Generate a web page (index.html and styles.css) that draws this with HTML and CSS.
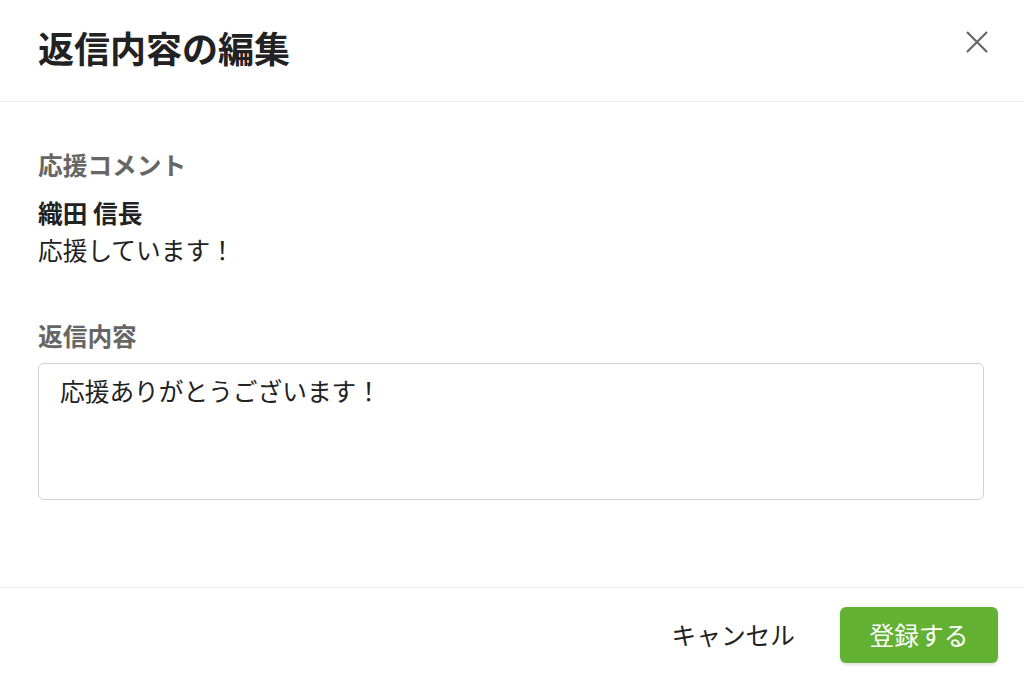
FILE: index.html
```html
<!DOCTYPE html>
<html lang="ja">
<head>
<meta charset="utf-8">
<title>返信内容の編集</title>
<link rel="stylesheet" href="styles.css">
</head>
<body>
<div class="modal">
  <header class="modal-header">
    <h1 class="modal-title">返信内容の編集</h1>
    <button class="close-btn" aria-label="閉じる">
      <svg width="24" height="24" viewBox="0 0 24 24"><path d="M2 2 L22 22 M22 2 L2 22" stroke="#666" stroke-width="2.2" fill="none"/></svg>
    </button>
  </header>
  <main class="modal-body">
    <div class="field-label">応援コメント</div>
    <div class="comment-author">織田 信長</div>
    <div class="comment-text">応援しています！</div>
    <label class="field-label reply-label" for="reply">返信内容</label>
    <textarea id="reply" class="reply-input">応援ありがとうございます！</textarea>
  </main>
  <footer class="modal-footer">
    <button class="btn-cancel">キャンセル</button>
    <button class="btn-submit">登録する</button>
  </footer>
</div>
</body>
</html>
```
FILE: styles.css
```css
* { box-sizing: border-box; }
html, body {
  margin: 0;
  padding: 0;
  background: #fff;
}
body {
  font-family: "Noto Sans CJK JP", "Noto Sans", sans-serif;
  font-size: 24.7px;
  line-height: 1.5;
  color: #222;
}
.modal {
  display: flex;
  flex-direction: column;
  height: 677px;
}
.modal-header {
  height: 102px;
  display: flex;
  align-items: center;
  justify-content: space-between;
  padding: 0 35px 6px 38px;
  border-bottom: 1px solid #ebebeb;
}
.modal-title {
  margin: 0;
  font-size: 36px;
  font-weight: 700;
  line-height: 1.2;
  color: #222;
}
.close-btn {
  background: none;
  border: 0;
  padding: 0;
  width: 24px;
  height: 24px;
  display: flex;
  cursor: pointer;
  margin-top: -11px;
}
.modal-body {
  padding: 44px 40px 0 38px;
  display: flex;
  flex-direction: column;
  flex: 1;
  border-bottom: 1px solid #ebebeb;
}
.field-label {
  font-weight: 700;
  color: #666;
}
.comment-author {
  font-weight: 700;
  margin-top: 11px;
}
.reply-label {
  margin-top: 49px;
}
.reply-input {
  margin-top: 9px;
  height: 137px;
  width: 100%;
  resize: none;
  border: 1px solid #d2d2d2;
  border-radius: 6px;
  padding: 8px 21px;
  font: inherit;
  color: #222;
  outline: none;
}
.modal-footer {
  height: 89px;
  display: flex;
  justify-content: flex-end;
  align-items: flex-start;
  gap: 45px;
  padding: 19px 26px 0 0;
}
.btn-cancel {
  background: none;
  border: 0;
  padding: 0;
  height: 56px;
  font: inherit;
  color: #222;
  cursor: pointer;
}
.btn-submit {
  width: 158px;
  height: 56px;
  border: 0;
  border-radius: 6px;
  background: #63b133;
  color: #fff;
  font: inherit;
  box-shadow: 0 2px 3px rgba(0,0,0,0.12);
  cursor: pointer;
}
```
